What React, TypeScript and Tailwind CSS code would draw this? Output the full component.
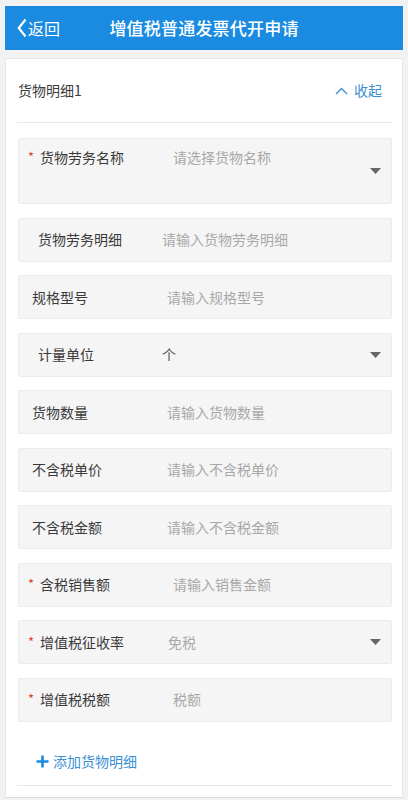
import React from "react";

const FONT = { fontFamily: '"Noto Sans CJK SC", "Noto Sans", sans-serif' };

function Triangle() {
  return (
    <svg width="11" height="6" viewBox="0 0 11 6" className="shrink-0">
      <path d="M0 0 H11 L5.5 6 Z" fill="#666" />
    </svg>
  );
}

type RowProps = {
  star?: boolean;
  label: string;
  value: string;
  filled?: boolean;
  padL: string;
  labelW: string;
  select?: boolean;
};

function Row({ star, label, value, filled, padL, labelW, select }: RowProps) {
  return (
    <div className={`flex items-center h-[44px] bg-[#f5f5f5] border border-[#ebebeb] rounded-[2px] ${padL} pr-[10px]`}>
      {star && <span className="w-[12px] text-[13px] leading-none text-[#e0443a] -mt-[2px]">*</span>}
      <span className={`${labelW} shrink-0 text-[14px] text-[#3a3a3a]`}>{label}</span>
      <span className={`flex-1 text-[14px] ${filled ? "text-[#555]" : "text-[#a8a8a8]"}`}>{value}</span>
      {select && <Triangle />}
    </div>
  );
}

export default function App() {
  return (
    <div className="min-h-[800px] bg-[#f2f2f2] pt-[6px] px-[5px]" style={FONT}>
      <div className="grid grid-cols-[1fr_auto_1fr] items-center h-[44px] bg-[#1a8be1] text-white">
        <div className="flex items-center pl-[12px]">
          <svg width="10" height="20" viewBox="0 0 10 20" className="mr-[1px]">
            <path d="M8.5 1.5 L1.8 10 L8.5 18.5" fill="none" stroke="#fff" strokeWidth="2.2" strokeLinejoin="miter" />
          </svg>
          <span className="text-[16px] leading-none">返回</span>
        </div>
        <div className="text-[17px] font-medium tracking-[0.2px]">增值税普通发票代开申请</div>
        <div />
      </div>

      <div className="mt-[8px] bg-white border border-[#e6e6e6] border-b-[#dcdcdc] pl-[12px] pr-[10px] pb-[11px]">
        <div className="flex items-center justify-between h-[63px]">
          <span className="text-[14px] text-[#3a3a3a]">货物明细1</span>
          <span className="flex items-center text-[14px] text-[#3b8fd3] mr-[10px]">
            <svg width="13" height="8" viewBox="0 0 13 8" className="mr-[6px]">
              <path d="M1 7 L6.5 1.5 L12 7" fill="none" stroke="#3b8fd3" strokeWidth="1.4" />
            </svg>
            收起
          </span>
        </div>
        <div className="h-px bg-[#e8e8e8] -ml-px" />

        <div className="flex flex-col gap-[13.5px] pt-[15px]">
          <div className="flex h-[66px] bg-[#f5f5f5] border border-[#ebebeb] rounded-[2px] pl-[9px] pr-[10px]">
            <div className="flex items-center self-start h-[20px] mt-[8px] flex-1">
              <span className="w-[12px] text-[13px] leading-none text-[#e0443a] -mt-[2px]">*</span>
              <span className="w-[133px] shrink-0 text-[14px] text-[#3a3a3a]">货物劳务名称</span>
              <span className="flex-1 text-[14px] text-[#a8a8a8]">请选择货物名称</span>
            </div>
            <div className="self-center">
              <Triangle />
            </div>
          </div>
          <Row label="货物劳务明细" value="请输入货物劳务明细" padL="pl-[19px]" labelW="w-[124px]" />
          <Row label="规格型号" value="请输入规格型号" padL="pl-[13px]" labelW="w-[135px]" />
          <Row label="计量单位" value="个" filled padL="pl-[19px]" labelW="w-[124px]" select />
          <Row label="货物数量" value="请输入货物数量" padL="pl-[13px]" labelW="w-[135px]" />
          <Row label="不含税单价" value="请输入不含税单价" padL="pl-[13px]" labelW="w-[135px]" />
          <Row label="不含税金额" value="请输入不含税金额" padL="pl-[13px]" labelW="w-[135px]" />
          <Row star label="含税销售额" value="请输入销售金额" padL="pl-[9px]" labelW="w-[133px]" />
          <Row star label="增值税征收率" value="免税" padL="pl-[9px]" labelW="w-[128px]" select />
          <Row star label="增值税税额" value="税额" padL="pl-[9px]" labelW="w-[133px]" />
        </div>

        <div className="flex items-center h-[20px] mt-[30px] mb-[13px] pl-[18px]">
          <svg width="13" height="13" viewBox="0 0 13 13" className="mr-[4px]">
            <path d="M6.5 0.5 V12.5 M0.5 6.5 H12.5" stroke="#1a8be1" strokeWidth="2.6" />
          </svg>
          <span className="text-[14px] text-[#3b8fd3]">添加货物明细</span>
        </div>
        <div className="h-px bg-[#e8e8e8] -ml-px" />
      </div>
    </div>
  );
}
